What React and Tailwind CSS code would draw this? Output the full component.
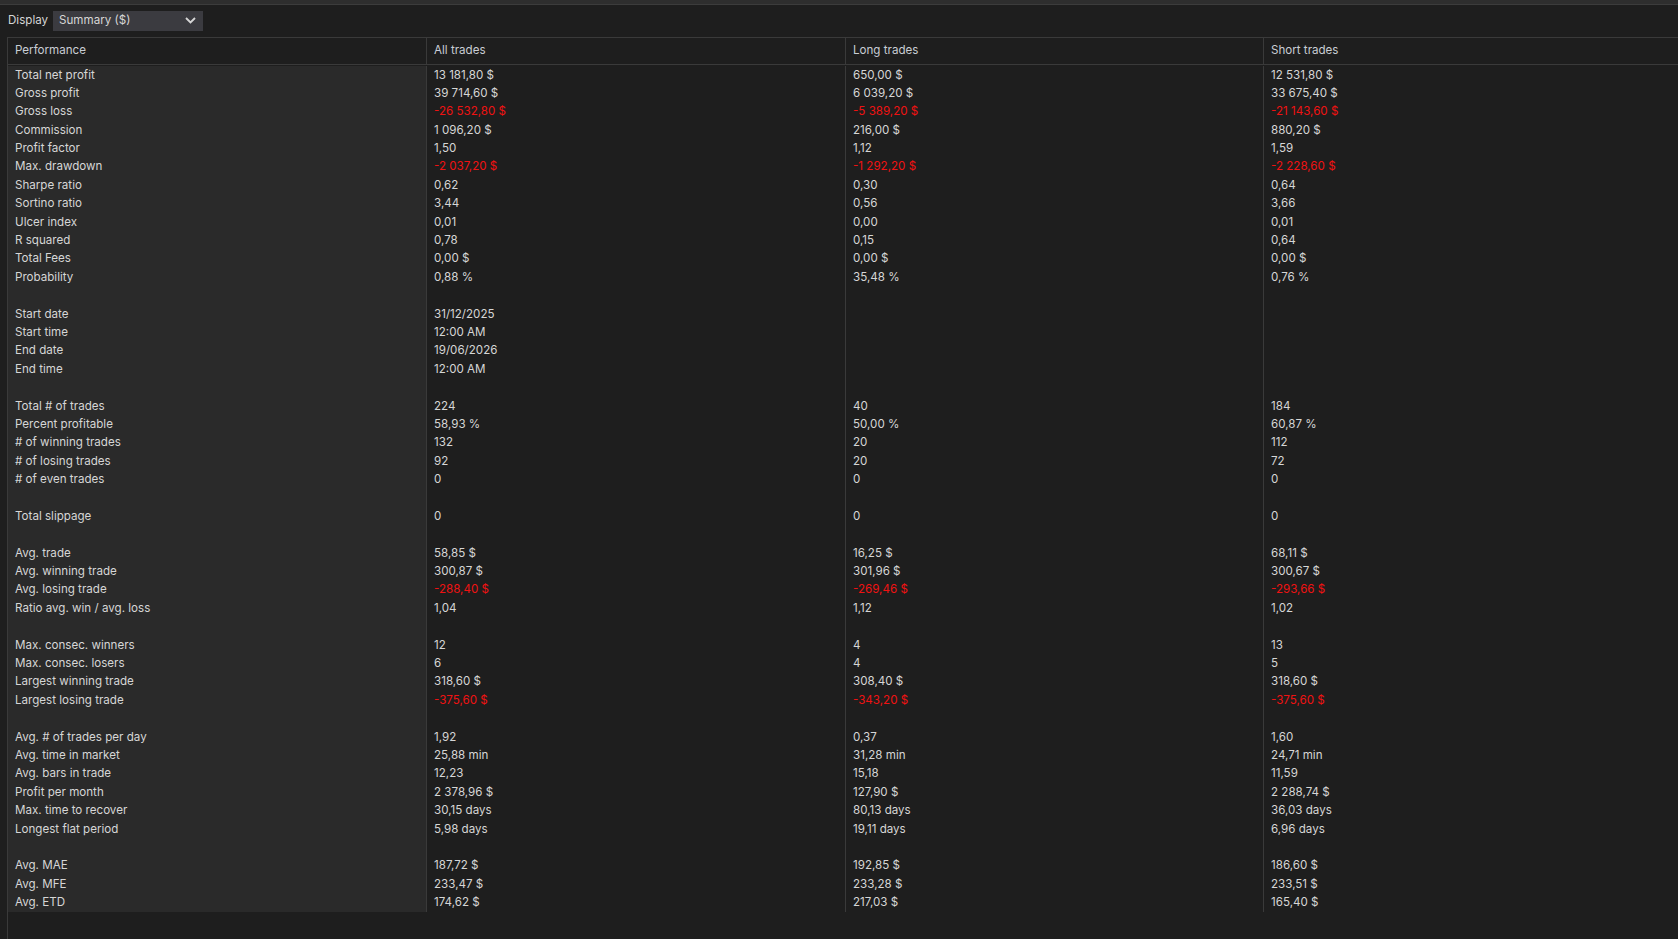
const rows = [
  ['Total net profit', '13 181,80 $', '650,00 $', '12 531,80 $'],
  ['Gross profit', '39 714,60 $', '6 039,20 $', '33 675,40 $'],
  ['Gross loss', '-26 532,80 $', '-5 389,20 $', '-21 143,60 $'],
  ['Commission', '1 096,20 $', '216,00 $', '880,20 $'],
  ['Profit factor', '1,50', '1,12', '1,59'],
  ['Max. drawdown', '-2 037,20 $', '-1 292,20 $', '-2 228,60 $'],
  ['Sharpe ratio', '0,62', '0,30', '0,64'],
  ['Sortino ratio', '3,44', '0,56', '3,66'],
  ['Ulcer index', '0,01', '0,00', '0,01'],
  ['R squared', '0,78', '0,15', '0,64'],
  ['Total Fees', '0,00 $', '0,00 $', '0,00 $'],
  ['Probability', '0,88 %', '35,48 %', '0,76 %'],
  null,
  ['Start date', '31/12/2025', '', ''],
  ['Start time', '12:00 AM', '', ''],
  ['End date', '19/06/2026', '', ''],
  ['End time', '12:00 AM', '', ''],
  null,
  ['Total # of trades', '224', '40', '184'],
  ['Percent profitable', '58,93 %', '50,00 %', '60,87 %'],
  ['# of winning trades', '132', '20', '112'],
  ['# of losing trades', '92', '20', '72'],
  ['# of even trades', '0', '0', '0'],
  null,
  ['Total slippage', '0', '0', '0'],
  null,
  ['Avg. trade', '58,85 $', '16,25 $', '68,11 $'],
  ['Avg. winning trade', '300,87 $', '301,96 $', '300,67 $'],
  ['Avg. losing trade', '-288,40 $', '-269,46 $', '-293,66 $'],
  ['Ratio avg. win / avg. loss', '1,04', '1,12', '1,02'],
  null,
  ['Max. consec. winners', '12', '4', '13'],
  ['Max. consec. losers', '6', '4', '5'],
  ['Largest winning trade', '318,60 $', '308,40 $', '318,60 $'],
  ['Largest losing trade', '-375,60 $', '-343,20 $', '-375,60 $'],
  null,
  ['Avg. # of trades per day', '1,92', '0,37', '1,60'],
  ['Avg. time in market', '25,88 min', '31,28 min', '24,71 min'],
  ['Avg. bars in trade', '12,23', '15,18', '11,59'],
  ['Profit per month', '2 378,96 $', '127,90 $', '2 288,74 $'],
  ['Max. time to recover', '30,15 days', '80,13 days', '36,03 days'],
  ['Longest flat period', '5,98 days', '19,11 days', '6,96 days'],
  null,
  ['Avg. MAE', '187,72 $', '192,85 $', '186,60 $'],
  ['Avg. MFE', '233,47 $', '233,28 $', '233,51 $'],
  ['Avg. ETD', '174,62 $', '217,03 $', '165,40 $'],
]

function Cell({ children, first }) {
  const neg = typeof children === 'string' && children.startsWith('-')
  return (
    <div
      className={
        'h-[18.4px] flex items-center px-[7px] whitespace-nowrap ' +
        (first ? 'bg-[#2a2a2a] ' : 'border-l border-[#3a3a3a] ') +
        (neg ? 'text-[#f01212]' : 'text-[#d6d6d6]')
      }
    >
      {children}
    </div>
  )
}

export default function App() {
  return (
    <div
      className="w-[1678px] h-[939px] bg-[#1e1e1e] text-[11.6px] flex flex-col overflow-hidden"
      style={{ fontFamily: 'Inter, "Noto Sans", sans-serif' }}
    >
      <div className="h-[5px] bg-[#2e2e2e] border-b border-[#3c3c3c]" />

      <div className="flex items-center h-[26px] mt-[5px] pl-[8px] gap-[5px] pb-[5px]">
        <span className="text-[#d6d6d6]">Display</span>
        <div className="w-[150px] h-[20px] bg-[#3b3b40] flex items-center justify-between pl-[6px] pr-[7px] text-[#d6d6d6]">
          <span>Summary ($)</span>
          <svg width="11" height="7" viewBox="0 0 11 7" fill="none">
            <path d="M1 1l4.5 4.5L10 1" stroke="#d6d6d6" strokeWidth="1.8" />
          </svg>
        </div>
      </div>

      <div className="flex-1 ml-[7px] mt-[1px] border-l border-t border-[#3a3a3a]">
        <div className="grid grid-cols-[418px_419px_418px_1fr] h-[27px] border-b border-[#3a3a3a] text-[#c9cdd4]">
          {['Performance', 'All trades', 'Long trades', 'Short trades'].map((h, i) => (
            <div key={h} className={'flex items-center px-[7px] ' + (i ? 'border-l border-[#3a3a3a]' : '')}>
              {h}
            </div>
          ))}
        </div>
        <div className="grid grid-cols-[418px_419px_418px_1fr] pt-[1px]">
          {rows.map((r, i) =>
            (r || ['', '', '', '']).map((c, j) => (
              <Cell key={i + '-' + j} first={j === 0}>
                {c}
              </Cell>
            ))
          )}
        </div>
      </div>
    </div>
  )
}
